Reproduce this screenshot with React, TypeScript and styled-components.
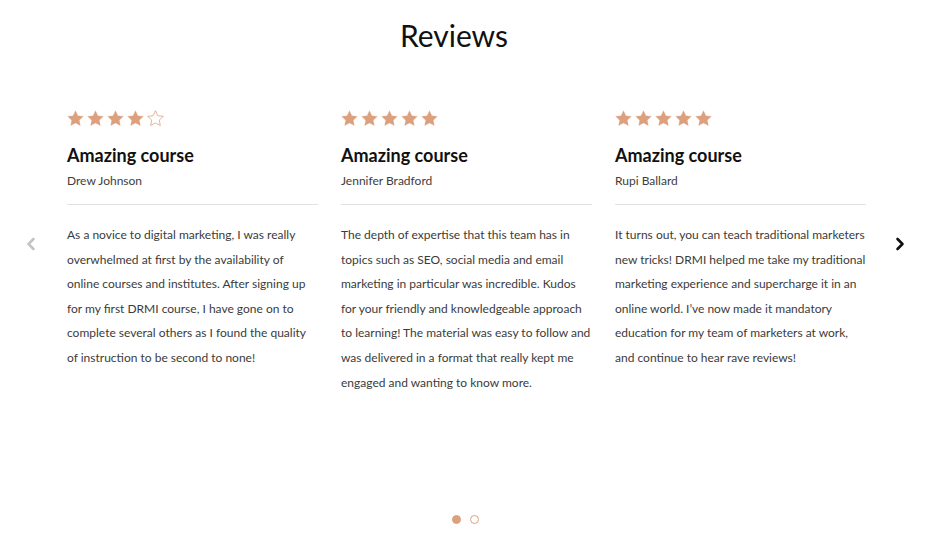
import React from "react";
import styled, { createGlobalStyle } from "styled-components";

const Global = createGlobalStyle`
  html, body { margin: 0; padding: 0; background: #fff; }
  body { font-family: Lato, "Open Sans", sans-serif; color: #333; }
`;

const Page = styled.div`
  width: 944px;
  height: 536px;
  display: flex;
  flex-direction: column;
  align-items: stretch;
`;

const Title = styled.h1`
  margin: 17px 0 0;
  text-align: center;
  font-family: Lato, sans-serif;
  font-weight: 400;
  font-size: 30px;
  line-height: 36px;
  color: #111;
  padding-right: 36px;
`;

const Carousel = styled.div`
  display: grid;
  grid-template-columns: 67px 1fr 78px;
  margin-top: 57px;
  height: 405px;
`;

const ArrowCell = styled.div<{ $side: "left" | "right" }>`
  display: flex;
  justify-content: flex-start;
  padding-left: ${(p) => (p.$side === "left" ? "25px" : "28px")};
  padding-top: 127px;
`;

const ArrowIcon = styled.svg<{ $muted?: boolean }>`
  width: 12px;
  height: 14px;
  color: ${(p) => (p.$muted ? "#c4c4c4" : "#111")};
`;

const Cards = styled.div`
  display: grid;
  grid-template-columns: repeat(3, 251px);
  column-gap: 23px;
`;

const Card = styled.article`
  display: flex;
  flex-direction: column;
`;

const Stars = styled.div`
  display: flex;
  gap: 3px;
  height: 17px;
`;

const CardTitle = styled.h3`
  margin: 16px 0 0;
  font-family: Lato, sans-serif;
  font-weight: 700;
  font-size: 18px;
  line-height: 24px;
  color: #111;
`;

const Author = styled.div`
  margin-top: 4px;
  font-size: 12px;
  line-height: 20px;
  color: #3d3d3d;
`;

const Divider = styled.hr`
  margin: 13px 0 0;
  border: none;
  border-top: 1px solid #e2e2e2;
  height: 0;
`;

const Body = styled.p`
  margin: 18px 0 0;
  font-size: 12px;
  line-height: 24.6px;
  color: #3b3b3b;
`;

const Dots = styled.div`
  display: flex;
  justify-content: center;
  gap: 9px;
  padding-right: 14px;
`;

const Dot = styled.span<{ $active?: boolean }>`
  width: 9px;
  height: 9px;
  box-sizing: border-box;
  border-radius: 50%;
  background: ${(p) => (p.$active ? "#dda07e" : "#fff")};
  border: 1px solid #dda07e;
`;

const STAR = "M12 1l3.3 7.1 7.7.9-5.7 5.3 1.5 7.7L12 18.2 5.2 22l1.5-7.7L1 9l7.7-.9z";

const Star: React.FC<{ filled: boolean }> = ({ filled }) => (
  <svg width="17" height="17" viewBox="0 0 24 24">
    <path
      d={STAR}
      fill={filled ? "#dda07e" : "none"}
      stroke="#dda07e"
      strokeWidth={filled ? 0.4 : 1.1}
      strokeLinejoin="round"
    />
  </svg>
);

const reviews = [
  {
    rating: 4,
    name: "Drew Johnson",
    text:
      "As a novice to digital marketing, I was really overwhelmed at first by the availability of online courses and institutes. After signing up for my first DRMI course, I have gone on to complete several others as I found the quality of instruction to be second to none!",
  },
  {
    rating: 5,
    name: "Jennifer Bradford",
    text:
      "The depth of expertise that this team has in topics such as SEO, social media and email marketing in particular was incredible. Kudos for your friendly and knowledgeable approach to learning! The material was easy to follow and was delivered in a format that really kept me engaged and wanting to know more.",
  },
  {
    rating: 5,
    name: "Rupi Ballard",
    text:
      "It turns out, you can teach traditional marketers new tricks! DRMI helped me take my traditional marketing experience and supercharge it in an online world. I’ve now made it mandatory education for my team of marketers at work, and continue to hear rave reviews!",
  },
];

export default function App() {
  return (
    <Page>
      <Global />
      <Title>Reviews</Title>
      <Carousel>
        <ArrowCell $side="left">
          <ArrowIcon $muted viewBox="0 0 12 14">
            <path d="M8.5 2L3.5 7l5 5" fill="none" stroke="currentColor" strokeWidth="2.6" strokeLinecap="round" strokeLinejoin="round" />
          </ArrowIcon>
        </ArrowCell>
        <Cards>
          {reviews.map((r) => (
            <Card key={r.name}>
              <Stars>
                {[0, 1, 2, 3, 4].map((i) => (
                  <Star key={i} filled={i < r.rating} />
                ))}
              </Stars>
              <CardTitle>Amazing course</CardTitle>
              <Author>{r.name}</Author>
              <Divider />
              <Body>{r.text}</Body>
            </Card>
          ))}
        </Cards>
        <ArrowCell $side="right">
          <ArrowIcon viewBox="0 0 12 14">
            <path d="M3.5 2l5 5-5 5" fill="none" stroke="currentColor" strokeWidth="2.6" strokeLinecap="round" strokeLinejoin="round" />
          </ArrowIcon>
        </ArrowCell>
      </Carousel>
      <Dots>
        <Dot $active />
        <Dot />
      </Dots>
    </Page>
  );
}
